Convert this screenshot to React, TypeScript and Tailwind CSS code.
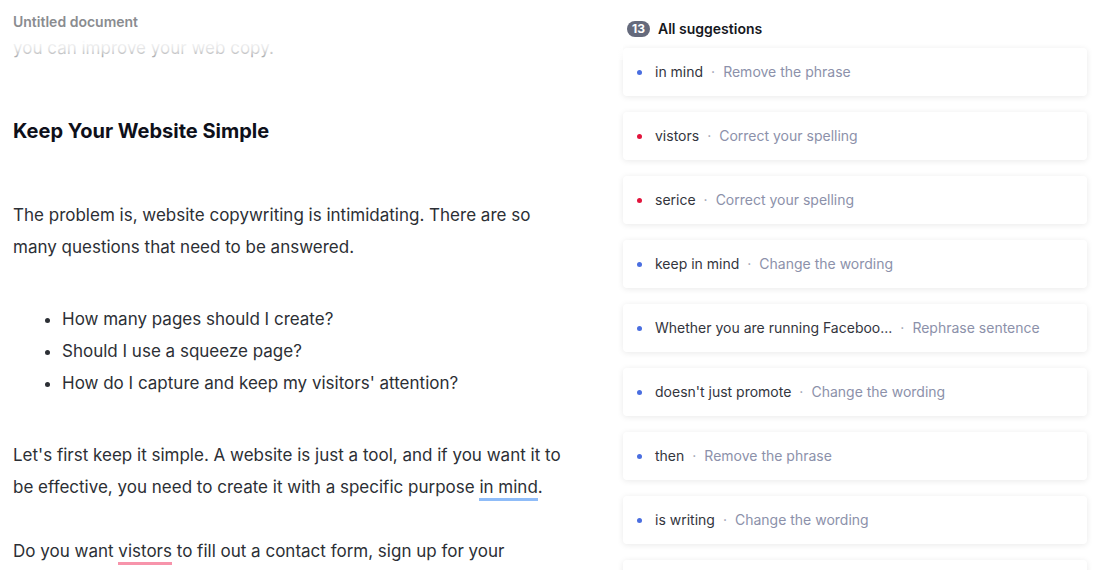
import React from 'react';

type Suggestion = {
    text: string;
    hint: string;
    kind: 'clarity' | 'correctness';
};

const suggestions: Suggestion[] = [
    { text: 'in mind', hint: 'Remove the phrase', kind: 'clarity' },
    { text: 'vistors', hint: 'Correct your spelling', kind: 'correctness' },
    { text: 'serice', hint: 'Correct your spelling', kind: 'correctness' },
    { text: 'keep in mind', hint: 'Change the wording', kind: 'clarity' },
    { text: 'Whether you are running Faceboo...', hint: 'Rephrase sentence', kind: 'clarity' },
    { text: "doesn't just promote", hint: 'Change the wording', kind: 'clarity' },
    { text: 'then', hint: 'Remove the phrase', kind: 'clarity' },
    { text: 'is writing', hint: 'Change the wording', kind: 'clarity' },
    { text: 'ultimately', hint: 'Remove the phrase', kind: 'clarity' },
];

const SuggestionCard: React.FC<{ item: Suggestion }> = ({ item }) => (
    <div className="flex h-[48px] shrink-0 items-center rounded-[4px] bg-white pl-[14px] shadow-[0_1px_6px_rgba(0,0,0,0.09)]">
        <span
            className={`h-[5px] w-[5px] rounded-full ${
                item.kind === 'correctness' ? 'bg-[#e2143c]' : 'bg-[#4a6ee0]'
            }`}
        />
        <span className="ml-[13px] text-[14px] leading-[16px] text-[#33353d]">{item.text}</span>
        <span className="mx-[8px] text-[14px] leading-[16px] text-[#9a9eb0]">·</span>
        <span className="text-[14px] leading-[16px] text-[#8c91aa]">{item.hint}</span>
    </div>
);

export default function App() {
    return (
        <div
            className="flex h-[570px] w-[1097px] overflow-hidden bg-white"
            style={{ fontFamily: 'Inter, "Noto Sans", sans-serif' }}
        >
            {/* Editor */}
            <div className="flex w-[623px] shrink-0 flex-col">
                <div className="h-[40px] shrink-0 pl-[13px] pt-[14px] text-[14px] font-semibold leading-[16px] text-[#8a8c90]">
                    Untitled document
                </div>
                <div className="relative flex-1 overflow-hidden">
                    <div className="pointer-events-none absolute inset-x-0 top-0 z-10 h-[20px] bg-gradient-to-b from-white via-white/85 to-white/50" />
                    <div className="-mt-[8px] w-[569px] pl-[13px] text-[17px] leading-[32px] text-[#2c2f35]">
                        <p>you can improve your web copy.</p>
                        <h2 className="mt-[51px] text-[20px] font-bold leading-[32px] text-[#0e101a]">
                            Keep Your Website Simple
                        </h2>
                        <p className="mt-[52px]">
                            The problem is, website copywriting is intimidating. There are so many questions that need
                            to be answered.
                        </p>
                        <ul className="mt-[40px] list-disc pl-[49px]">
                            <li>How many pages should I create?</li>
                            <li>Should I use a squeeze page?</li>
                            <li>How do I capture and keep my visitors' attention?</li>
                        </ul>
                        <p className="mt-[40px]">
                            Let's first keep it simple. A website is just a tool, and if you want it to be effective,
                            you need to create it with a specific purpose{' '}
                            <span className="border-b-[3px] border-[#8fbcf8] pb-[1px]">in mind</span>.
                        </p>
                        <p className="mt-[32px]">
                            Do you want{' '}
                            <span className="border-b-[3px] border-[#f794ab] pb-[1px]">vistors</span> to fill out a
                            contact form, sign up for your newsletter, or buy your product or serice?
                        </p>
                    </div>
                </div>
            </div>

            {/* Suggestions */}
            <div className="flex w-[464px] shrink-0 flex-col">
                <div className="flex h-[48px] shrink-0 items-start pt-[21px]">
                    <span className="ml-[4px] flex h-[16px] w-[23px] items-center justify-center rounded-full bg-[#656a7c] text-[12px] font-bold leading-none text-white">
                        13
                    </span>
                    <span className="ml-[8px] text-[14px] font-semibold leading-[16px] text-[#16181d]">
                        All suggestions
                    </span>
                </div>
                <div className="flex flex-col gap-[16px]">
                    {suggestions.map((s, i) => (
                        <SuggestionCard key={i} item={s} />
                    ))}
                </div>
            </div>
        </div>
    );
}
